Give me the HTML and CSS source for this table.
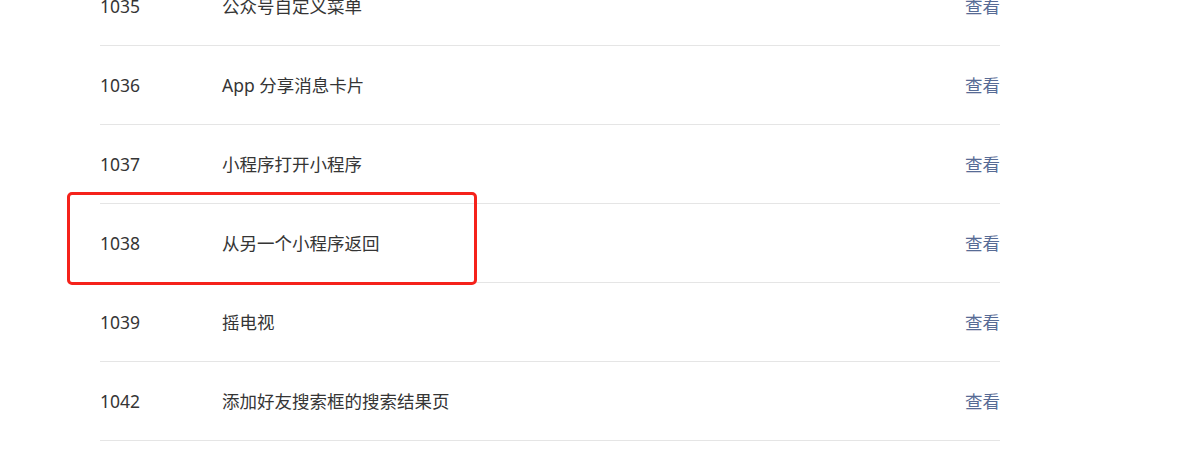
FILE: index.html
```html
<!DOCTYPE html>
<html lang="zh-CN">
<head>
    <meta charset="UTF-8" />
    <meta name="viewport" content="width=device-width, initial-scale=1" />
    <title>场景值列表</title>
    <link rel="stylesheet" href="styles.css">
</head>
<body>

<main class="page">
    <table class="scene-table">
        <tbody>
            <tr>
                <td class="col-id">1035</td>
                <td class="col-name">公众号自定义菜单</td>
                <td class="col-op"><a href="#">查看</a></td>
            </tr>
            <tr>
                <td class="col-id">1036</td>
                <td class="col-name">App 分享消息卡片</td>
                <td class="col-op"><a href="#">查看</a></td>
            </tr>
            <tr>
                <td class="col-id">1037</td>
                <td class="col-name">小程序打开小程序</td>
                <td class="col-op"><a href="#">查看</a></td>
            </tr>
            <tr class="marked">
                <td class="col-id">1038<span class="highlight"></span></td>
                <td class="col-name">从另一个小程序返回</td>
                <td class="col-op"><a href="#">查看</a></td>
            </tr>
            <tr>
                <td class="col-id">1039</td>
                <td class="col-name">摇电视</td>
                <td class="col-op"><a href="#">查看</a></td>
            </tr>
            <tr>
                <td class="col-id">1042</td>
                <td class="col-name">添加好友搜索框的搜索结果页</td>
                <td class="col-op"><a href="#">查看</a></td>
            </tr>
        </tbody>
    </table>
</main>

</body>
</html>
```

FILE: styles.css
```css
body {
    margin: 0;
    background: #fff;
    color: #353535;
    font-family: "Noto Sans", "Noto Sans CJK SC", sans-serif;
    overflow: hidden;
}

.page {
    width: 900px;
    margin: -33px 0 0 100px;
}

.scene-table {
    width: 100%;
    border-collapse: collapse;
    font-size: 17.5px;
}

.scene-table td {
    height: 78px;
    padding: 0;
    line-height: 26px;
    border-bottom: 1px solid #e5e5e5;
    vertical-align: middle;
}

.col-id {
    width: 122px;
    position: relative;
}

.col-op {
    text-align: right;
}

.col-op a {
    color: #576b95;
    text-decoration: none;
}

/* red annotation frame drawn over the row */
.highlight {
    position: absolute;
    left: -33px;
    top: -12px;
    width: 404px;
    height: 87px;
    border: 3px solid #f5221b;
    border-radius: 5px;
    pointer-events: none;
}
```
